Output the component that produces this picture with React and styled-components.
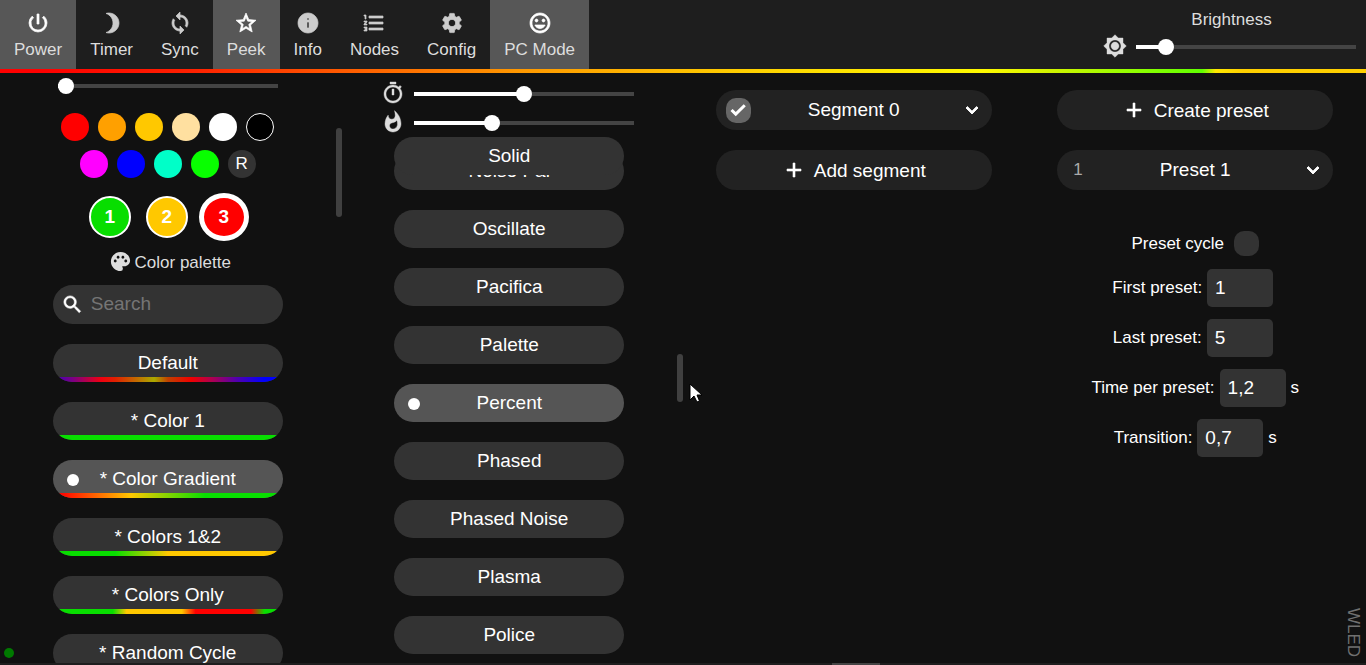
import React, { useState } from 'react';
import styled, { createGlobalStyle, css } from 'styled-components';
import {
  MdAdd,
  MdBrightness3,
  MdBrightness7,
  MdCheck,
  MdExpandMore,
  MdFormatListNumbered,
  MdInfo,
  MdMood,
  MdPalette,
  MdPowerSettingsNew,
  MdSearch,
  MdSettings,
  MdStarBorder,
  MdSync,
  MdWhatshot,
} from 'react-icons/md';

const GlobalStyle = createGlobalStyle`
  * {
    box-sizing: border-box;
  }
  html, body, #root {
    height: 100%;
    margin: 0;
  }
  body {
    background: #111;
    color: #fff;
    font: 17px/20px "Liberation Sans", Arial, sans-serif;
    overflow: hidden;
  }
  button, input {
    font: inherit;
    color: inherit;
    border: 0;
    margin: 0;
    padding: 0;
    outline: 0;
  }
  button {
    cursor: pointer;
  }
`;

// thickens an icon, without its transparent bounding path
const boldIcon = width => css`
  svg path:not([fill='none']) {
    stroke: currentColor;
    stroke-width: ${width};
  }
`;

const Page = styled.div`
  height: 100%;
  display: flex;
  flex-direction: column;
`;

const Header = styled.header`
  flex: none;
  display: flex;
  justify-content: space-between;
  height: 69px;
  background: #1e1e1e;
`;

const Tabs = styled.nav`
  display: flex;
`;

const Tab = styled.button`
  display: flex;
  flex-direction: column;
  align-items: center;
  gap: 5px;
  padding: 11px 14px 0;
  background: ${props => (props.$active ? '#575757' : 'transparent')};
  color: #ddd;
  white-space: nowrap;

  svg {
    color: ${props => (props.$active ? '#fff' : '#ccc')};
  }
  ${boldIcon(0.7)}
`;

const Brightness = styled.div`
  display: flex;
  flex-direction: column;
  gap: 2px;
  padding: 10px 6px 0 0;
  color: #ddd;
`;

const BrightnessLabel = styled.label`
  text-align: center;
`;

const PeekStrip = styled.div`
  flex: none;
  height: 4px;
  background: linear-gradient(
    90deg,
    #f00 3%,
    #ff2000 14%,
    #ff5a00 25%,
    #ff9800 38%,
    #ffc000 50%,
    #ffe000 60%,
    #fffa00 72%,
    #d0f400 77%,
    #90ff00 83%,
    #60ff00 88%,
    #ffe800 89%,
    #ffd000 91%,
    #ffd000 100%
  );
`;

const Main = styled.main`
  flex: 1;
  min-height: 0;
  display: grid;
  grid-template-columns: repeat(4, 1fr);
`;

const Column = styled.section`
  position: relative;
  display: flex;
  flex-direction: column;
  align-items: center;
  min-width: 0;
  overflow: hidden;
  padding: ${props => props.$top}px ${props => (props.$scroll ? 6 : 0)}px 0 0;

  > * {
    flex-shrink: 0;
  }
`;

const ScrollThumb = styled.div`
  position: absolute;
  right: 0;
  top: ${props => props.$top}px;
  width: 6px;
  height: ${props => props.$size}px;
  border-radius: 3px;
  background: #404040;
`;

const SliderRow = styled.div`
  display: flex;
  align-items: center;
  gap: 9px;
  padding-right: 4px;
  height: 29px;
  color: #ddd;

  svg {
    margin-bottom: 2px;
  }
  ${boldIcon(0.4)}
`;

const Range = styled.input`
  appearance: none;
  display: block;
  width: 220px;
  height: 16px;
  background: linear-gradient(#fff, #fff) left center / calc(8px + (100% - 16px) * ${props => props.$fill}) 4px no-repeat,
    linear-gradient(#444, #444) left center / 100% 4px no-repeat;
  border-radius: 2px;

  &::-webkit-slider-thumb {
    appearance: none;
    width: 16px;
    height: 16px;
    border-radius: 50%;
    background: #fff;
  }
`;

const Swatches = styled.div`
  display: flex;
  flex-wrap: wrap;
  justify-content: center;
  gap: 9px;
  width: 222px;
  margin-top: 19px;
`;

const Swatch = styled.button`
  width: 28px;
  height: 28px;
  border-radius: 50%;
  border: ${props => (props.$outlined ? '1px solid #fff' : '0')};
  background: ${props => props.$color};
`;

const Slots = styled.div`
  display: grid;
  grid-template-columns: repeat(3, 57px);
  place-items: center;
  height: 50px;
  padding-right: 2px;
  margin-top: 14px;
`;

const Slot = styled.button`
  width: 42px;
  height: 42px;
  border: 2px solid #fff;
  border-radius: 50%;
  background: ${props => props.$color};
  font-size: 19px;
  font-weight: bold;

  ${props => props.$active && css`
    width: 50px;
    height: 48px;
    border-width: 5px;
  `}
`;

const PaletteTitle = styled.div`
  display: flex;
  align-items: center;
  gap: 3px;
  height: 24px;
  margin-top: 9px;
  padding-left: 4px;
  color: #ddd;

  svg {
    margin-bottom: 4px;
  }
`;

const SearchBox = styled.label`
  display: flex;
  align-items: center;
  gap: 7px;
  width: 230px;
  height: 39px;
  margin: 10px 0 20px;
  padding: 0 8px;
  border-radius: 20px;
  background: #333;

  input {
    flex: 1;
    min-width: 0;
    padding-bottom: 2px;
    background: transparent;
    font-size: 19px;
  }
  input::placeholder {
    color: #757575;
    opacity: 1;
  }
  ${boldIcon(0.6)}
`;

const List = styled.div`
  display: flex;
  flex-direction: column;
  gap: 20px;
`;

const Item = styled.label`
  position: relative;
  display: block;
  flex: none;
  width: 230px;
  height: 38px;
  border-radius: 19px;
  overflow: hidden;
  background: ${props => (props.$selected ? '#555' : '#333')};
  font-size: 19px;
  line-height: 38px;
  text-align: center;
  cursor: pointer;
`;

const ItemRadio = styled.input`
  appearance: none;
  position: absolute;
  left: 14px;
  top: 14px;
  width: 12px;
  height: 12px;
  border-radius: 50%;

  &:checked {
    background: #fff;
  }
`;

const ItemGradient = styled.span`
  position: absolute;
  left: 0;
  right: 0;
  bottom: 0;
  height: 5px;
  background: ${props => props.$fill};
`;

// keeps the first effect above the ones scrolled beneath it
const StickyItem = styled.div`
  position: relative;
  z-index: 1;
  height: 15px;
`;

const Cards = styled.div`
  display: flex;
  flex-direction: column;
  gap: 20px;
  width: 276px;
`;

const Card = styled.div`
  display: grid;
  grid-template-columns: 25px 1fr 27px;
  align-items: center;
  height: 40px;
  padding: 0 8px 0 10px;
  border-radius: 20px;
  background: #222;
`;

const CardName = styled.span`
  font-size: 19px;
  text-align: center;
`;

const CardId = styled.span`
  padding-left: 6px;
  color: #aaa;
`;

const IconButton = styled.button`
  display: flex;
  justify-content: flex-end;
  background: transparent;

  ${boldIcon(0.9)}
`;

const AddButton = styled.button`
  display: flex;
  align-items: center;
  justify-content: center;
  gap: 8px;
  height: 40px;
  padding-top: 2px;
  border-radius: 20px;
  background: #222;
  font-size: 19px;

  svg {
    margin-bottom: 2px;
  }
  ${boldIcon(0.6)}
`;

const Check = styled.span`
  display: grid;
  width: 25px;
  height: 25px;

  > * {
    grid-area: 1 / 1;
  }
  input {
    appearance: none;
    border-radius: 10px;
    background: #333;
  }
  input:checked {
    background: #666;
  }
  svg {
    place-self: center;
    pointer-events: none;
    z-index: 1;
  }
  ${boldIcon(2)}
`;

const Form = styled.form`
  display: flex;
  flex-direction: column;
  align-items: center;
  gap: 12px;
  margin-top: 41px;
`;

const Field = styled.div`
  display: flex;
  align-items: center;
  height: ${props => (props.$check ? 26 : 38)}px;
  padding-bottom: ${props => (props.$check ? 1 : 0)}px;
  gap: ${props => (props.$check ? 10 : 5)}px;
`;

const NumberInput = styled.input`
  width: 66px;
  height: 38px;
  padding: 0 8px;
  margin-right: ${props => (props.$unit ? 0 : 5)}px;
  border-radius: 5px;
  background: #333;
  font-size: 19px;
`;

const BottomBar = styled.div`
  flex: none;
  height: 2px;
  padding-left: 832px;
  background: #1e1e1e;

  &::before {
    content: '';
    display: block;
    width: 48px;
    height: 2px;
    background: #444;
  }
`;

const StatusDot = styled.div`
  position: absolute;
  left: 4px;
  bottom: 7px;
  width: 10px;
  height: 10px;
  border-radius: 50%;
  background: #007a00;
`;

const Brand = styled.div`
  position: absolute;
  right: 3px;
  bottom: 8px;
  writing-mode: vertical-rl;
  color: #707070;
`;

const Pointer = styled.svg`
  position: absolute;
  left: 689px;
  top: 383px;
`;

const tabs = [
  { name: 'Power', Icon: MdPowerSettingsNew, active: true },
  { name: 'Timer', Icon: MdBrightness3 },
  { name: 'Sync', Icon: MdSync },
  { name: 'Peek', Icon: MdStarBorder, active: true },
  { name: 'Info', Icon: MdInfo },
  { name: 'Nodes', Icon: MdFormatListNumbered },
  { name: 'Config', Icon: MdSettings },
  { name: 'PC Mode', Icon: MdMood, active: true },
];

const swatches = ['#ff0000', '#ffa000', '#ffc800', '#ffe0a0', '#ffffff', '#000000', '#ff00ff', '#0000ff', '#00ffc8', '#08ff00'];

const slots = ['#08de00', '#ffc800', '#ff0000'];

const palettes = [
  { name: 'Default', fill: 'linear-gradient(90deg, #5000af 3%, #7f0080 9%, #f00010 21%, #e02000 27%, #aaaa00 44%, #c04000 50%, #f00000 60%, #b00050 69%, #5000af 80%, #0000ff 92%)' },
  { name: '* Color 1', fill: '#08de00' },
  { name: '* Color Gradient', fill: 'linear-gradient(90deg, #f00 3%, #ffc800 34%, #08de00 66%)' },
  { name: '* Colors 1&2', fill: 'linear-gradient(90deg, #08de00 27%, #ffc800 50%)' },
  { name: '* Colors Only', fill: 'linear-gradient(90deg, #08de00 26%, #ffc800 32%, #ffc800 56%, #f00 62%, #f00 86%, #08de00 92%)' },
  { name: '* Random Cycle', fill: 'linear-gradient(90deg, #08de00, #ffc800)' },
];

const effects = ['Noise Pal', 'Oscillate', 'Pacifica', 'Palette', 'Percent', 'Phased', 'Phased Noise', 'Plasma', 'Police'];

const fields = [
  { id: 'first', label: 'First preset:', value: '1' },
  { id: 'last', label: 'Last preset:', value: '5' },
  { id: 'time', label: 'Time per preset:', value: '1,2', unit: 's' },
  { id: 'transition', label: 'Transition:', value: '0,7', unit: 's' },
];

function TimerIcon() {
  return (
    <svg width="24" height="24" viewBox="0 0 24 24" fill="currentColor">
      <path d="M15 1H9v2h6V1zm-4 13h2V8h-2v6zm8.03-6.61l1.42-1.42c-.43-.51-.9-.99-1.41-1.41l-1.42 1.42C16.07 4.74 14.12 4 12 4c-4.97 0-9 4.03-9 9s4.02 9 9 9 9-4.03 9-9c0-2.12-.74-4.07-1.97-5.61zM12 20c-3.87 0-7-3.13-7-7s3.13-7 7-7 7 3.13 7 7-3.13 7-7 7z" />
    </svg>
  );
}

function Slider({ start, ...rest }) {
  const [value, setValue] = useState(start);
  return (
    <Range
      type="range"
      min="0"
      max="255"
      value={value}
      $fill={value / 255}
      onChange={e => setValue(Number(e.target.value))}
      {...rest}
    />
  );
}

function ListItem({ group, name, fill, selected, onSelect }) {
  return (
    <Item $selected={selected}>
      <ItemRadio type="radio" name={group} checked={selected} onChange={() => onSelect(name)} />
      {name}
      {fill && <ItemGradient $fill={fill} />}
    </Item>
  );
}

function App() {
  const [palette, setPalette] = useState('* Color Gradient');
  const [effect, setEffect] = useState('Percent');
  const [slot, setSlot] = useState(2);

  return (
    <Page>
      <GlobalStyle />
      <Header>
        <Tabs>
          {tabs.map(({ name, Icon, active }) => (
            <Tab key={name} type="button" $active={active}>
              <Icon size={24} />
              {name}
            </Tab>
          ))}
        </Tabs>
        <Brightness>
          <BrightnessLabel htmlFor="bri">Brightness</BrightnessLabel>
          <SliderRow>
            <MdBrightness7 size={24} />
            <Slider id="bri" start={27} />
          </SliderRow>
        </Brightness>
      </Header>
      <PeekStrip />

      <Main>
        <Column $top={5} $scroll>
          <Slider start={0} aria-label="White channel" />
          <Swatches>
            {swatches.map(color => (
              <Swatch key={color} type="button" aria-label={color} $color={color} $outlined={color === '#000000'} />
            ))}
            <Swatch type="button" $color="#333">R</Swatch>
          </Swatches>
          <Slots>
            {slots.map((color, i) => (
              <Slot key={color} type="button" $color={color} $active={slot === i} onClick={() => setSlot(i)}>
                {i + 1}
              </Slot>
            ))}
          </Slots>
          <PaletteTitle>
            <MdPalette size={23} />
            Color palette
          </PaletteTitle>
          <SearchBox>
            <MdSearch size={23} />
            <input type="text" placeholder="Search" />
          </SearchBox>
          <List>
            {palettes.map(p => (
              <ListItem key={p.name} group="palette" {...p} selected={palette === p.name} onSelect={setPalette} />
            ))}
          </List>
          <ScrollThumb $top={55} $size={89} />
        </Column>

        <Column $top={6} $scroll>
          <SliderRow>
            <TimerIcon />
            <Slider start={128} aria-label="Effect speed" />
          </SliderRow>
          <SliderRow>
            <MdWhatshot size={24} />
            <Slider start={88} aria-label="Effect intensity" />
          </SliderRow>
          <StickyItem>
            <ListItem group="effect" name="Solid" selected={effect === 'Solid'} onSelect={setEffect} />
          </StickyItem>
          <List>
            {effects.map(name => (
              <ListItem key={name} group="effect" name={name} selected={effect === name} onSelect={setEffect} />
            ))}
          </List>
          <ScrollThumb $top={281} $size={48} />
        </Column>

        <Column $top={17}>
          <Cards>
            <Card>
              <Check>
                <input type="checkbox" aria-label="Select segment 0" defaultChecked />
                <MdCheck size={18} />
              </Check>
              <CardName>Segment 0</CardName>
              <IconButton type="button" aria-label="Expand segment">
                <MdExpandMore size={24} />
              </IconButton>
            </Card>
            <AddButton type="button">
              <MdAdd size={24} />
              Add segment
            </AddButton>
          </Cards>
        </Column>

        <Column $top={17}>
          <Cards>
            <AddButton type="button">
              <MdAdd size={24} />
              Create preset
            </AddButton>
            <Card>
              <CardId>1</CardId>
              <CardName>Preset 1</CardName>
              <IconButton type="button" aria-label="Expand preset">
                <MdExpandMore size={24} />
              </IconButton>
            </Card>
          </Cards>
          <Form>
            <Field $check>
              <label htmlFor="cycle">Preset cycle</label>
              <Check>
                <input id="cycle" type="checkbox" />
              </Check>
            </Field>
            {fields.map(f => (
              <Field key={f.id}>
                <label htmlFor={f.id}>{f.label}</label>
                <NumberInput id={f.id} type="text" inputMode="decimal" defaultValue={f.value} $unit={f.unit} />
                {f.unit}
              </Field>
            ))}
          </Form>
        </Column>
      </Main>
      <BottomBar />

      <StatusDot />
      <Brand>WLED</Brand>
      <Pointer width="14" height="22" viewBox="0 0 14 22">
        <path d="M1 1v16l4-4 3 6 2.500-1-2.500-6h5z" fill="#fff" stroke="#000" strokeWidth="1" />
      </Pointer>
    </Page>
  );
}

export default App;
